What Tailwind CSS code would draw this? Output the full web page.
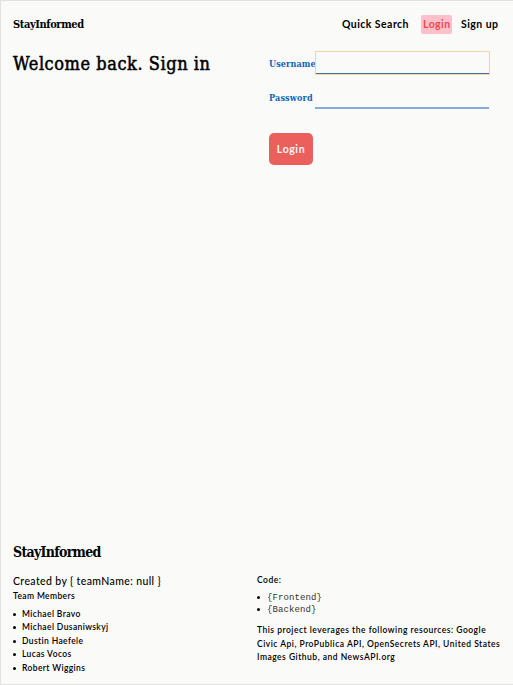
<!DOCTYPE html>
<html lang="en"><head><meta charset="utf-8"><title>StayInformed</title>
<script src="https://cdn.jsdelivr.net/npm/@tailwindcss/browser@4"></script></head>
<body class="h-[685px] w-[513px] overflow-hidden bg-[#fafaf8] font-['Lato','Liberation_Sans',sans-serif] text-black">
<div class="flex h-full flex-col whitespace-nowrap border-t border-b border-l border-[#e2e2e2] pl-3">
  <header class="flex h-[46px] items-center justify-between pr-[13px]">
    <a class="pt-0.5 font-['DejaVu_Serif_Condensed','DejaVu_Serif',serif] text-[11px] font-bold tracking-[-0.4px]">StayInformed</a>
    <nav class="flex items-center pt-px text-[10.5px] leading-[19px] font-bold tracking-[0.45px]">
      <a>Quick Search</a>
      <a class="mr-[9px] ml-3 w-[31px] rounded-xs bg-[#ffc0cb] pl-0.5 text-[#e8484d]">Login</a>
      <a class="w-[39px]">Sign up</a>
    </nav>
  </header>
  <main class="flex flex-1">
    <h1 class="w-64 pt-[3px] font-['DejaVu_Serif_Condensed','DejaVu_Serif',serif] text-[18px] leading-[28px] tracking-[0.56px] [-webkit-text-stroke:0.5px_black]">Welcome back. Sign in</h1>
    <form class="w-[221px] pt-[5px]">
      <div class="flex h-[23px]">
        <label for="username" class="w-[47px] font-['DejaVu_Serif_Condensed','DejaVu_Serif',serif] text-[9px] leading-[24px] font-bold tracking-[0.1px] text-[#1264b8]">Username</label>
        <input id="username" class="h-[22px] w-[173px] border-b border-[#426f9f] shadow-[0_0_0_1px_#f0d6ae] outline-none">
      </div>
      <div class="mt-[11px] flex h-[23px]">
        <label for="password" class="w-[46px] font-['DejaVu_Serif_Condensed','DejaVu_Serif',serif] text-[9px] leading-[24px] font-bold tracking-[0.15px] text-[#1264b8]">Password</label>
        <input id="password" type="password" class="h-[23px] w-[174px] border-b-2 border-[#82addb] outline-none">
      </div>
      <button type="button" class="mt-6 h-8 w-[44px] rounded-[5px] bg-[#eb5f5d] pt-0.5 text-[10.5px] font-bold tracking-[0.6px] text-[#fff5f3]">Login</button>
    </form>
  </main>
  <footer class="h-[142px]">
    <h2 class="font-['DejaVu_Serif_Condensed','DejaVu_Serif',serif] text-[14px] leading-[20px] font-bold tracking-[-0.7px]">StayInformed</h2>
    <div class="flex text-[8.5px] leading-[13.5px] font-semibold tracking-[0.38px]">
      <section class="w-[244px] pt-3">
        <h3 class="text-[10.5px] leading-[15px] font-medium tracking-[0.38px]">Created by { teamName: null }</h3>
        <h4 class="pt-px font-semibold">Team Members</h4>
        <ul class="mt-1 [&>li]:flex [&>li]:items-center [&>li]:before:mr-[6px] [&>li]:before:size-[3px] [&>li]:before:rounded-full [&>li]:before:bg-black [&>li]:before:content-['']">
          <li>Michael Bravo</li><li>Michael Dusaniwskyj</li><li>Dustin Haefele</li><li>Lucas Vocos</li><li>Robert Wiggins</li>
        </ul>
      </section>
      <section class="pt-3 tracking-[0.5px]">
        <h4>Code:</h4>
        <ul class="mt-1 font-['Liberation_Mono',monospace] text-[9px] leading-[12px] font-normal tracking-[0.1px] text-[#333] [&>li]:flex [&>li]:items-center [&>li]:before:mr-[7px] [&>li]:before:size-[3px] [&>li]:before:rounded-full [&>li]:before:bg-black [&>li]:before:content-['']">
          <li>{Frontend}</li><li>{Backend}</li>
        </ul>
        <p class="mt-[8.5px]">This project leverages the following resources: Google<br>Civic Api, ProPublica API, OpenSecrets API, United States<br>Images Github, and NewsAPI.org</p>
      </section>
    </div>
  </footer>
</div>
</body></html>
